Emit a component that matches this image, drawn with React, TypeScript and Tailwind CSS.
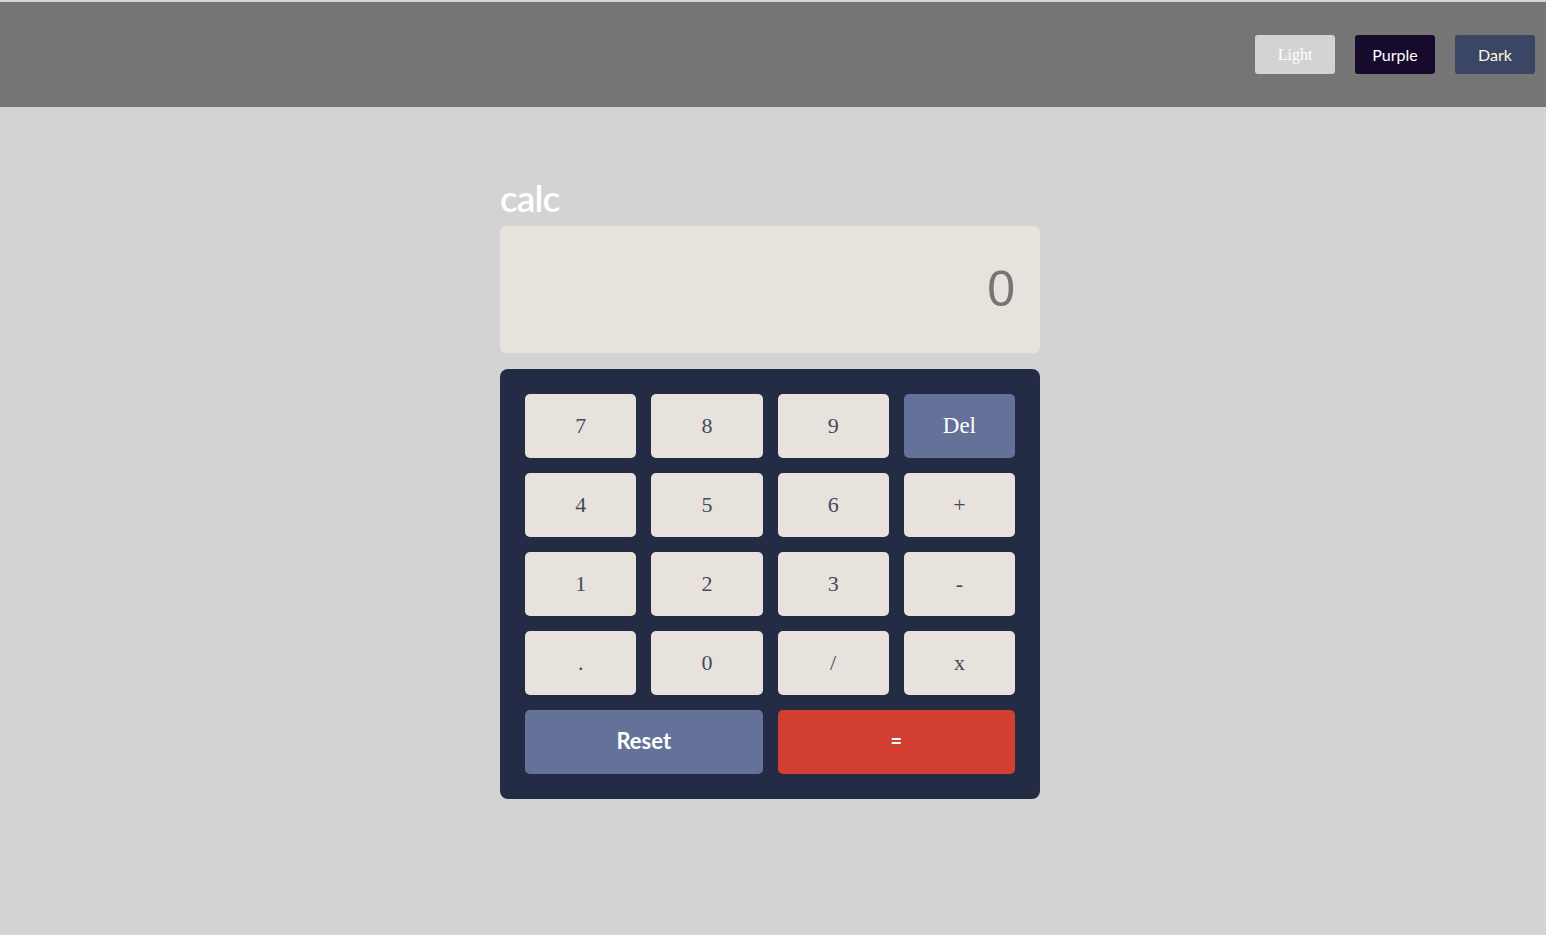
import { FC } from 'react'

const keys = ['7', '8', '9', 'Del', '4', '5', '6', '+', '1', '2', '3', '-', '.', '0', '/', 'x']

const App: FC = (): JSX.Element => {
 return (
  <div className="flex min-h-[935px] bg-white">
   <div className="w-[1546px] bg-[#d3d3d3] pt-[2px] flex flex-col">
    <header className="h-[105px] bg-[#757575] flex items-center justify-end gap-5 pr-[11px]">
     <button className="w-20 h-[39px] rounded-[3px] bg-[#d3d3d3] text-white text-base font-['Liberation_Serif',serif]">
      Light
     </button>
     <button className="w-20 h-[39px] rounded-[3px] bg-[#170a2c] text-white text-base font-['Lato',sans-serif]">
      Purple
     </button>
     <button className="w-20 h-[39px] rounded-[3px] bg-[#3b4664] text-[#fff8dc] text-base font-['Lato',sans-serif]">
      Dark
     </button>
    </header>

    <main className="flex justify-center pt-[72px] pr-[6px]">
     <div className="w-[540px] flex flex-col">
      <h1 className="text-white text-[37px] leading-[38px] font-semibold tracking-tight font-['Lato',sans-serif] h-[47px]">
       calc
      </h1>
      <div className="h-[127px] rounded-[6px] bg-[#e8e2dc] flex items-center justify-end pr-[25px]">
       <span className="text-[#757575] text-[50px] font-['Liberation_Sans',sans-serif]">0</span>
      </div>
      <div className="mt-4 rounded-[8px] bg-[#242b45] p-[25px] flex flex-col gap-[15px]">
       <div className="grid grid-cols-4 gap-x-[15px] gap-y-[15px]">
        {keys.map((k) => (
         <button
          key={k}
          className={
           k === 'Del'
            ? 'h-16 rounded-[5px] bg-[#647198] text-white text-[23px] font-["Liberation_Serif",serif]'
            : 'h-16 rounded-[5px] bg-[#e8e2dc] text-[#434a59] text-[22px] leading-[28px] font-["Liberation_Serif",serif]'
          }>
          {k}
         </button>
        ))}
       </div>
       <div className="grid grid-cols-2 gap-[15px]">
        <button className="h-16 rounded-[5px] bg-[#647198] text-white text-[22px] font-bold font-['Lato',sans-serif] pb-1">
         Reset
        </button>
        <button className="h-16 rounded-[5px] bg-[#d03f2f] text-white text-[20px] font-bold font-['Lato',sans-serif] pb-1">
         =
        </button>
       </div>
      </div>
     </div>
    </main>
   </div>
  </div>
 )
}

export default App
